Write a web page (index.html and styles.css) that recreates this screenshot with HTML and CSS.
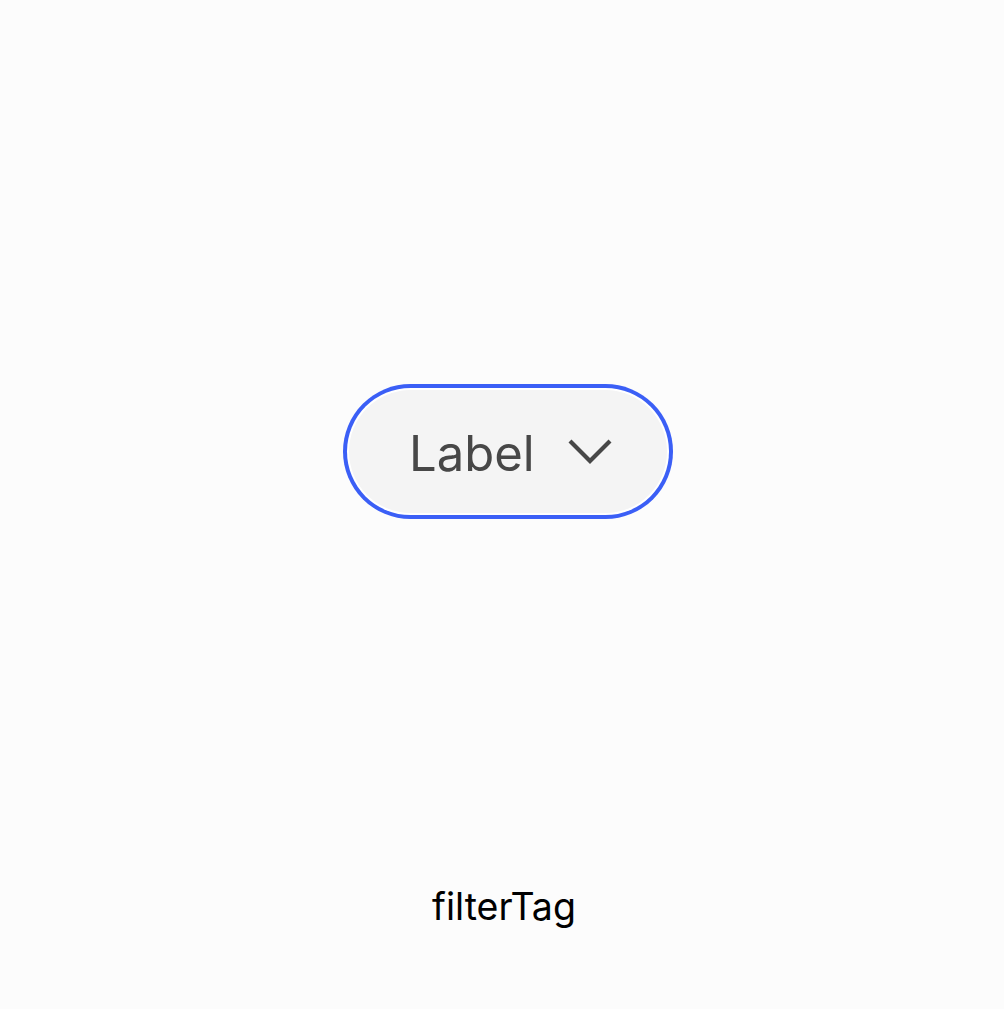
FILE: index.html
```html
<!DOCTYPE html>
<html lang="en">
<head>
<meta charset="utf-8">
<title>filterTag</title>
<link rel="stylesheet" href="styles.css">
</head>
<body>
<main class="frame">
  <section class="stage">
    <button class="filter-tag" type="button">
      <span class="filter-tag__label">Label</span>
      <svg class="filter-tag__chevron" width="46" height="28" viewBox="0 0 46 28" aria-hidden="true">
        <polyline points="3,3 23,23 43,3" fill="none" stroke="#474747" stroke-width="4.2" stroke-linejoin="miter" stroke-linecap="butt"/>
      </svg>
    </button>
  </section>
  <p class="caption">filterTag</p>
</main>
</body>
</html>
```
FILE: styles.css
```css
html, body {
  margin: 0;
  padding: 0;
  background: #fcfcfc;
}

.frame {
  width: 1004px;
  height: 1009px;
  box-sizing: border-box;
  display: flex;
  flex-direction: column;
  align-items: stretch;
  font-family: Inter, "Noto Sans", sans-serif;
}

.stage {
  padding-top: 390px;
  padding-left: 349px;
  height: 470px;
  box-sizing: border-box;
}

.filter-tag {
  width: 318px;
  height: 123px;
  box-sizing: border-box;
  border: none;
  border-radius: 62px;
  background: #f4f4f4;
  box-shadow: 0 0 0 2px #ffffff, 0 0 0 6px #3b5ff6;
  display: flex;
  align-items: center;
  padding: 0 0 0 60px;
  gap: 32px;
  font-family: Inter, "Noto Sans", sans-serif;
  cursor: pointer;
}

.filter-tag__label {
  font-size: 49px;
  font-weight: 400;
  color: #474747;
  line-height: 1;
  padding-top: 3px;
}

.filter-tag__chevron {
  display: block;
  margin-top: 1px;
}

.caption {
  margin: 0;
  text-align: center;
  padding-left: 4px;
  padding-top: 415px;
  font-size: 37.5px;
  line-height: 44px;
  color: #000;
  font-weight: 400;
}
```
